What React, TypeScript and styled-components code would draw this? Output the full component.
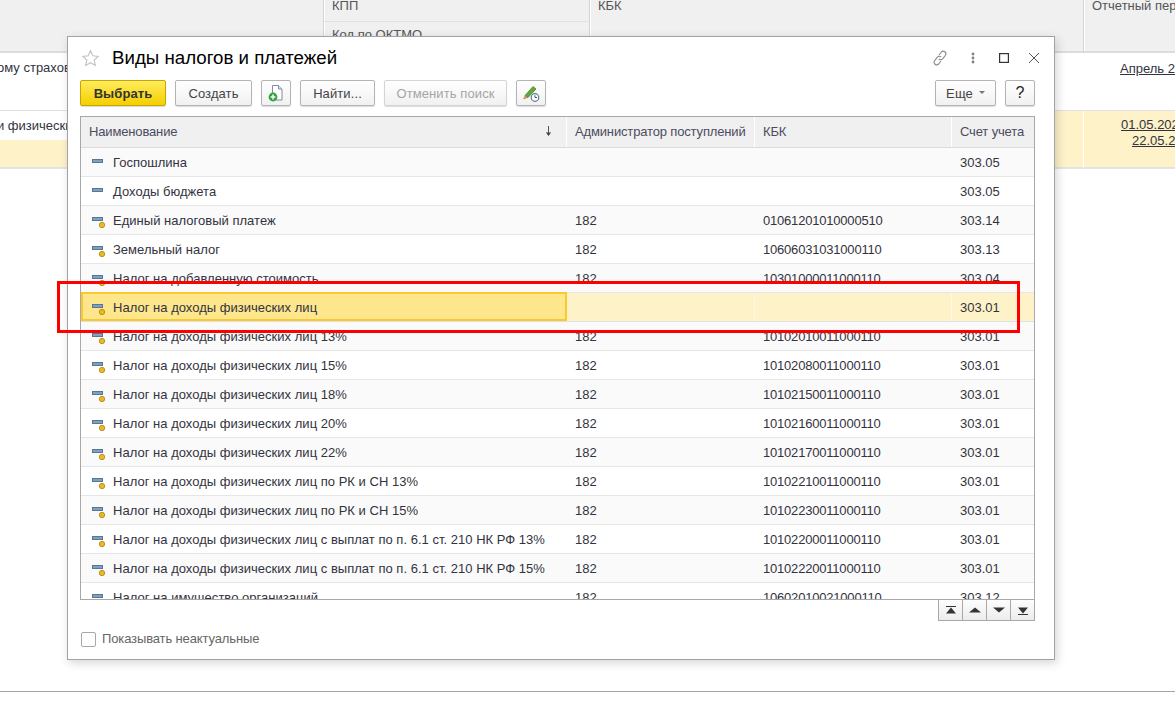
import React from 'react';
import styled, { createGlobalStyle } from 'styled-components';

const Global = createGlobalStyle`
  html, body { margin: 0; padding: 0; background: #fff; overflow: hidden; }
  body { font-family: "Liberation Sans", Arial, sans-serif; color: #333; }
`;

const Page = styled.div`
  position: relative;
  width: 1175px;
  height: 711px;
  overflow: hidden;
  background: #fff;
  font-size: 13px;
`;

const BgGrid = styled.div`
  display: grid;
  grid-template-columns: 323px 266px 494px 92px;
  grid-template-rows: 53px 58px 57px;
  border-bottom: 1px solid #e4e4e4;
`;

const BgHead = styled.div`
  background: #f0f0f0;
  border-bottom: 2px solid #dcdcdc;
  border-left: ${p => (p.$line ? '1px solid #d4d4d4' : '0')};
  box-shadow: ${p => (p.$line ? 'inset 1px 0 0 #fff' : 'none')};
  padding: ${p => (p.$line ? '0 8px' : '0')};
  color: #555;
  line-height: 12px;
  white-space: nowrap;
  overflow: hidden;
`;

const BgHeadStack = styled(BgHead)`
  padding: 0;
  display: flex;
  flex-direction: column;
`;

const BgHeadCell = styled.div`
  height: ${p => p.$h}px;
  padding: 0 8px;
  line-height: ${p => p.$lh}px;
  border-bottom: ${p => (p.$sep ? '1px solid #e2e2e2' : '0')};
`;

const BgCell = styled.div`
  grid-column: ${p => p.$col};
  background: ${p =>
    p.$split ? 'linear-gradient(#fff 29px, #fdf2c8 29px)' : p.$y ? '#fdf2c8' : '#fff'};
  border-bottom: 1px solid #e2e2e2;
  border-left: ${p => (p.$line ? '1px solid #fff' : '0')};
  padding-top: 8px;
  box-sizing: border-box;
  color: #333340;
  white-space: nowrap;
  overflow: hidden;
  line-height: 14px;
  text-indent: ${p => p.$indent ?? 0}px;
`;

const BgLink = styled.span`
  text-decoration: underline;
  display: block;
  padding-left: ${p => p.$pad}px;
  line-height: 16px;
  margin-top: ${p => p.$top ?? 0}px;
`;

const Backdrop = styled.div`
  height: 522px;
  border-bottom: 1px solid #a4a4a4;
`;

const Modal = styled.div`
  position: absolute;
  left: 67px;
  top: 36px;
  width: 988px;
  height: 624px;
  box-sizing: border-box;
  background: #fff;
  border: 1px solid #a3a3a3;
  box-shadow: 2px 3px 9px rgba(0, 0, 0, 0.17);
  display: flex;
  flex-direction: column;
  padding: 0 19px 0 12px;
`;

const TitleBar = styled.div`
  display: flex;
  align-items: center;
  height: 42px;
  flex: none;
`;

const Star = styled.svg`
  display: block;
  margin-left: 1px;
  flex: none;
`;

const Title = styled.div`
  margin-left: 12px;
  font-size: 18.7px;
  color: #000;
  white-space: nowrap;
  flex: 1;
`;

const WinIcons = styled.div`
  display: flex;
  align-items: center;
  margin-right: -5px;
`;

const WinIcon = styled.svg`
  display: block;
  margin-left: ${p => p.$ml ?? 0}px;
`;

const Toolbar = styled.div`
  display: flex;
  align-items: flex-start;
  height: 26px;
  margin-top: 1px;
  flex: none;
`;

const Btn = styled.div`
  box-sizing: border-box;
  height: 26px;
  width: ${p => p.$w}px;
  margin-left: ${p => p.$ml ?? 0}px;
  border: 1px solid ${p => (p.$primary ? '#c8a400' : p.$off ? '#d4d4d4' : '#b4b4b4')};
  border-radius: 2px;
  box-shadow: 0 1px 1px rgba(0, 0, 0, 0.14);
  background: ${p => (p.$primary ? 'linear-gradient(#ffec5c, #f5cf00)' : 'linear-gradient(#ffffff, #f1f1f1)')};
  color: ${p => (p.$primary ? '#333' : p.$off ? '#a5a5a5' : '#444')};
  font-weight: ${p => (p.$primary ? 700 : 400)};
  font-size: 13px;
  letter-spacing: 0.1px;
  display: flex;
  align-items: center;
  justify-content: center;
  white-space: nowrap;
  flex: none;
`;

const Help = styled.span`
  font-size: 16px;
  color: #222;
`;

const Caret = styled.svg`
  margin-left: 6px;
`;

const Spacer = styled.div`
  flex: 1;
`;

const Table = styled.div`
  margin-top: 10px;
  width: 955px;
  height: 484px;
  box-sizing: border-box;
  border: 1px solid #a8a8a8;
  overflow: hidden;
  flex: none;
`;

const Cols = `grid-template-columns: 486px 188px 197px 82px;`;

const HeadRow = styled.div`
  display: grid;
  ${Cols}
  height: 31px;
  background: #f0f0f0;
  border-bottom: 1px solid #dcdcdc;
  box-sizing: border-box;
`;

const HeadCell = styled.div`
  padding: 0 ${p => p.$pr ?? 8}px 2px 8px;
  color: #4c4c60;
  border-right: ${p => (p.$last ? '0' : '1px solid #fff')};
  white-space: nowrap;
  display: flex;
  justify-content: space-between;
  align-items: center;
  letter-spacing: -0.15px;
`;

const Row = styled.div`
  display: grid;
  ${Cols}
  height: 29px;
  box-sizing: border-box;
  background: ${p => (p.$sel ? '#fdf2c8' : p.$odd ? '#fafafa' : '#fff')};
  border-bottom: 1px solid ${p => (p.$sel ? '#e0e0e6' : '#e6e6e6')};
`;

const Cell = styled.div`
  padding: 0 8px;
  height: 28px;
  color: #333340;
  white-space: nowrap;
  overflow: hidden;
  display: flex;
  align-items: center;
  box-sizing: border-box;
  letter-spacing: ${p => (p.$num ? '-0.2px' : '0')};
  border-right: ${p => (p.$sel && !p.$last ? '1px solid #fff8e0' : '0')};
`;

const NameCell = styled(Cell)`
  padding: 0 0 0 11px;
  letter-spacing: 0.02px;
  ${p =>
    p.$sel &&
    `
    background: #fde68c;
    border: 2px solid #fbc92c;
    padding: 1px 0 0 9px;
    height: 29px;
    margin-top: -1px;
  `}
`;

const RowIcon = styled.svg`
  flex: none;
  margin-right: 7px;
`;

const PagerRow = styled.div`
  display: flex;
  justify-content: flex-end;
  width: 955px;
  margin-top: -1px;
  flex: none;
`;

const Pager = styled.div`
  display: flex;
  background: #fff;
  border: 1px solid #a8a8a8;
`;

const PageBtn = styled.div`
  width: ${p => (p.$first ? 23 : 24)}px;
  height: 20px;
  box-sizing: border-box;
  background: linear-gradient(#fdfdfd, #ececec);
  border-left: ${p => (p.$first ? '0' : '1px solid #a8a8a8')};
  display: flex;
  align-items: center;
  justify-content: center;
`;

const Footer = styled.div`
  display: flex;
  align-items: center;
  margin-top: 10px;
  height: 16px;
  color: #666;
  flex: none;
  letter-spacing: -0.13px;
`;

const FooterLabel = styled.span`
  margin-top: -2px;
`;

const Check = styled.div`
  width: 15px;
  height: 15px;
  box-sizing: border-box;
  border: 1px solid #a8a8a8;
  border-radius: 2px;
  margin: 0 6px 0 1px;
  background: #fff;
`;

const Marker = styled.div`
  position: absolute;
  left: 57px;
  top: 281px;
  width: 963px;
  height: 52px;
  box-sizing: border-box;
  border: 3px solid #f00;
`;

const ItemIcon = ({ dot }: { dot: boolean }) => (
  <RowIcon width="14" height="15" viewBox="0 0 14 15">
    <rect x="0.5" y="4.5" width="10" height="3" fill="#7ba2c4" stroke="#5a7791" />
    {dot && <circle cx="10" cy="12" r="2.7" fill="#eeb920" stroke="#a98612" strokeWidth="0.8" />}
  </RowIcon>
);

type R = [string, string, string, string, boolean];
const rows: R[] = [
  ['Госпошлина', '', '', '303.05', false],
  ['Доходы бюджета', '', '', '303.05', false],
  ['Единый налоговый платеж', '182', '01061201010000510', '303.14', true],
  ['Земельный налог', '182', '10606031031000110', '303.13', true],
  ['Налог на добавленную стоимость', '182', '10301000011000110', '303.04', true],
  ['Налог на доходы физических лиц', '', '', '303.01', true],
  ['Налог на доходы физических лиц 13%', '182', '10102010011000110', '303.01', true],
  ['Налог на доходы физических лиц 15%', '182', '10102080011000110', '303.01', true],
  ['Налог на доходы физических лиц 18%', '182', '10102150011000110', '303.01', true],
  ['Налог на доходы физических лиц 20%', '182', '10102160011000110', '303.01', true],
  ['Налог на доходы физических лиц 22%', '182', '10102170011000110', '303.01', true],
  ['Налог на доходы физических лиц по РК и СН 13%', '182', '10102210011000110', '303.01', true],
  ['Налог на доходы физических лиц по РК и СН 15%', '182', '10102230011000110', '303.01', true],
  ['Налог на доходы физических лиц с выплат по п. 6.1 ст. 210 НК РФ 13%', '182', '10102200011000110', '303.01', true],
  ['Налог на доходы физических лиц с выплат по п. 6.1 ст. 210 НК РФ 15%', '182', '10102220011000110', '303.01', true],
  ['Налог на имущество организаций', '182', '10602010021000110', '303.12', true],
];

export default function App() {
  return (
    <Page>
      <Global />
      <BgGrid>
        <BgHead />
        <BgHeadStack $line>
          <BgHeadCell $h={21} $lh={11} $sep>КПП</BgHeadCell>
          <BgHeadCell $h={30} $lh={26}>Код по ОКТМО</BgHeadCell>
        </BgHeadStack>
        <BgHead $line>КБК</BgHead>
        <BgHead $line>Отчетный пер</BgHead>
        <BgCell $col="1 / 4" $indent={-3}>ому страхов</BgCell>
        <BgCell $col="4">
          <BgLink $pad={37}>Апрель 2</BgLink>
        </BgCell>
        <BgCell $col="1" $split $indent={-3}>и физически</BgCell>
        <BgCell $col="2 / 4" $y />
        <BgCell $col="4" $y $line>
          <BgLink $pad={37} $top={-2}>01.05.202</BgLink>
          <BgLink $pad={48}>22.05.2</BgLink>
        </BgCell>
      </BgGrid>
      <Backdrop />
      <Modal>
        <TitleBar>
          <Star width="19" height="19" viewBox="0 0 20 20">
            <path d="M10 1.800l2.400 5.300 5.700.6-4.200 3.900 1.200 5.700L10 14.400l-5.100 2.900 1.200-5.700-4.200-3.900 5.700-.6z" fill="#fff" stroke="#c4c4c4" strokeWidth="1.200" />
          </Star>
          <Title>Виды налогов и платежей</Title>
          <WinIcons>
            <WinIcon width="16" height="16" viewBox="0 0 16 16" fill="none" stroke="#8a8a8a" strokeWidth="1.100">
              <path d="M7 5l2.400-3a2.600 2.600 0 0 1 4 3.300L10.600 8.800a2.600 2.600 0 0 1-3.800.2" />
              <path d="M9 11l-2.400 3a2.600 2.600 0 0 1-4-3.300L5.400 7.200a2.600 2.600 0 0 1 3.800-.2" />
            </WinIcon>
            <WinIcon $ml={23} width="4" height="14" viewBox="0 0 4 14" fill="#808080">
              <circle cx="2" cy="3" r="1.400" /><circle cx="2" cy="7" r="1.400" /><circle cx="2" cy="11" r="1.400" />
            </WinIcon>
            <WinIcon $ml={24} width="10" height="10" viewBox="0 0 10 10" fill="none" stroke="#333" strokeWidth="1.200">
              <rect x="0.600" y="0.600" width="8.800" height="8.800" />
            </WinIcon>
            <WinIcon $ml={19} width="12" height="12" viewBox="0 0 12 12" fill="none" stroke="#555" strokeWidth="1">
              <path d="M1 1l10 10M11 1L1 11" />
            </WinIcon>
          </WinIcons>
        </TitleBar>
        <Toolbar>
          <Btn $primary $w={86}>Выбрать</Btn>
          <Btn $w={77} $ml={9}>Создать</Btn>
          <Btn $w={30} $ml={9}>
            <svg width="18" height="18" viewBox="0 0 18 18">
              <path d="M5.500 1.500h6l3.500 3.500v11h-9.500z" fill="#fff" stroke="#7d8ea0" />
              <path d="M11.500 1.500v3.500H15" fill="#dfe6ee" stroke="#7d8ea0" />
              <circle cx="6" cy="13" r="4.400" fill="#2fa53c" />
              <path d="M3.600 13h4.800M6 10.600v4.800" stroke="#fff" strokeWidth="1.500" />
            </svg>
          </Btn>
          <Btn $w={75} $ml={9}>Найти...</Btn>
          <Btn $off $w={123} $ml={9}>Отменить поиск</Btn>
          <Btn $w={30} $ml={9}>
            <svg width="20" height="20" viewBox="0 0 20 20">
              <path d="M4 12.500l8-9 3 2.500-8 8.500z" fill="#62a83d" stroke="#3f7a27" strokeWidth="0.700" />
              <path d="M2.500 16l1.500-3.500 3 2z" fill="#d9a25a" stroke="#8a6a3a" strokeWidth="0.400" />
              <circle cx="14" cy="14.500" r="3.800" fill="#fff" stroke="#5d7a92" strokeWidth="1.200" />
              <path d="M14 12.300v2.200h2" fill="none" stroke="#41566a" />
            </svg>
          </Btn>
          <Spacer />
          <Btn $w={61}>
            Еще
            <Caret width="6" height="4" viewBox="0 0 6 4"><path d="M0 0h6L3 3z" fill="#777" /></Caret>
          </Btn>
          <Btn $w={30} $ml={9}><Help>?</Help></Btn>
        </Toolbar>
        <Table>
          <HeadRow>
            <HeadCell $pr={14}>
              Наименование
              <svg width="7" height="10" viewBox="0 0 7 10"><path d="M3.500 0v8M1.500 6.500l2 3 2-3" fill="#444" stroke="#444" strokeWidth="0.900" /></svg>
            </HeadCell>
            <HeadCell>Администратор поступлений</HeadCell>
            <HeadCell>КБК</HeadCell>
            <HeadCell $last>Счет учета</HeadCell>
          </HeadRow>
          {rows.map((r, i) => {
            const sel = i === 5;
            return (
              <Row key={i} $sel={sel} $odd={i % 2 === 0}>
                <NameCell $sel={sel}>
                  <ItemIcon dot={r[4]} />
                  {r[0]}
                </NameCell>
                <Cell $sel={sel}>{r[1]}</Cell>
                <Cell $sel={sel} $num>{r[2]}</Cell>
                <Cell $sel={sel} $last>{r[3]}</Cell>
              </Row>
            );
          })}
        </Table>
        <PagerRow>
          <Pager>
            <PageBtn $first>
              <svg width="12" height="9" viewBox="0 0 12 9"><path d="M1 0.500h10" stroke="#333" /><path d="M6 1.500L11 7.500H1z" fill="#333" /></svg>
            </PageBtn>
            <PageBtn>
              <svg width="12" height="6" viewBox="0 0 12 6"><path d="M6 0.500L12 5.500H0z" fill="#333" /></svg>
            </PageBtn>
            <PageBtn>
              <svg width="12" height="6" viewBox="0 0 12 6"><path d="M6 5.500L12 0.500H0z" fill="#333" /></svg>
            </PageBtn>
            <PageBtn>
              <svg width="12" height="9" viewBox="0 0 12 9"><path d="M1 8.500h10" stroke="#333" /><path d="M6 7.500L11 1.500H1z" fill="#333" /></svg>
            </PageBtn>
          </Pager>
        </PagerRow>
        <Footer>
          <Check />
          <FooterLabel>Показывать неактуальные</FooterLabel>
        </Footer>
      </Modal>
      <Marker />
    </Page>
  );
}
